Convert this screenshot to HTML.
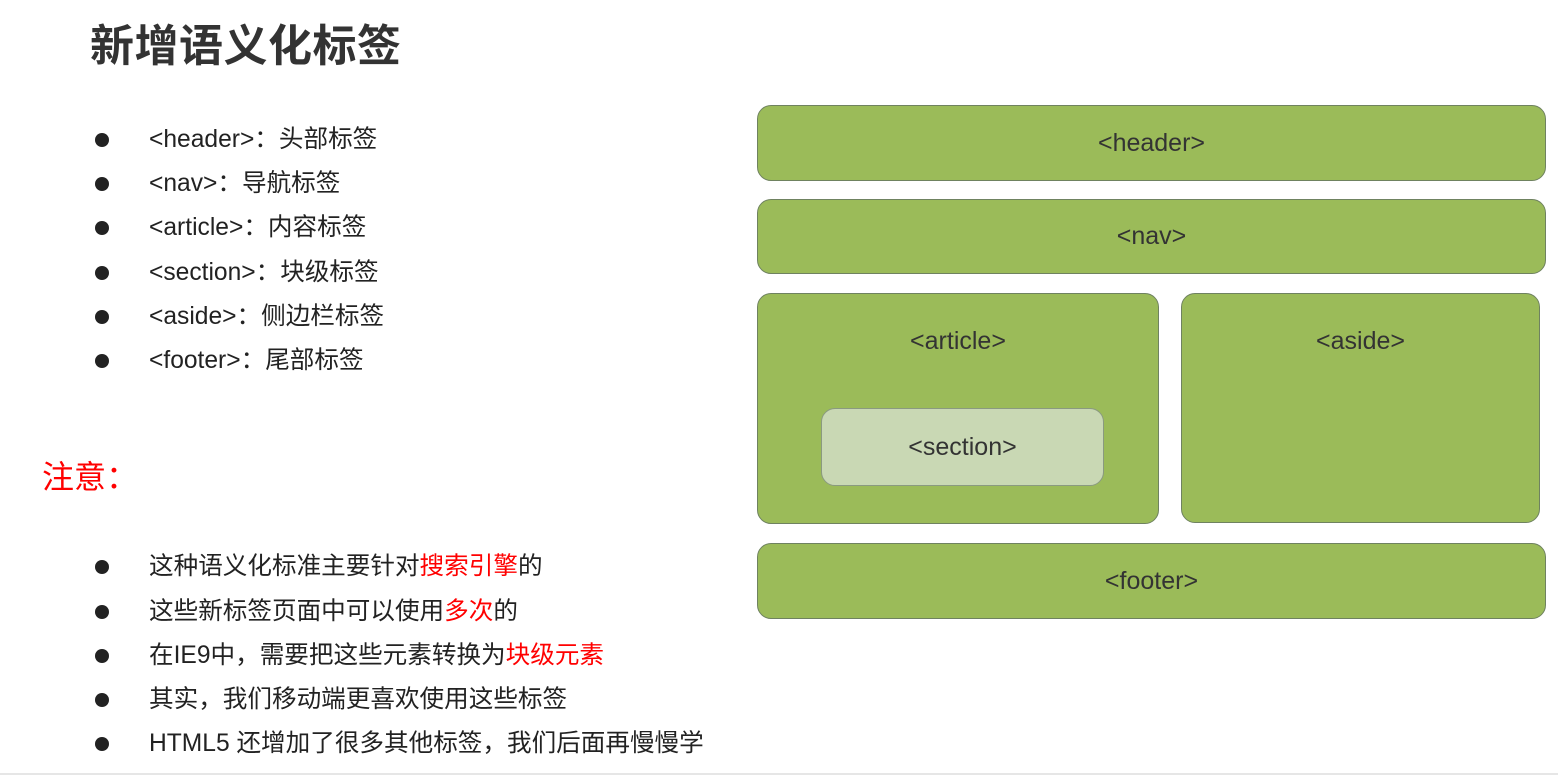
<!DOCTYPE html>
<html><head><meta charset="utf-8"><style>
body{margin:0;width:1558px;height:777px;background:#fff;position:relative;overflow:hidden;font-family:"Liberation Sans","Noto Sans CJK SC",sans-serif;color:#222}
.t{position:absolute;left:90px;top:10px;font-size:44px;font-weight:bold;color:#333;letter-spacing:0.5px}
.li{position:absolute;left:149px;font-size:24.6px;line-height:30px;color:#222;white-space:nowrap}
.li:before{content:"";position:absolute;left:-54px;top:8px;width:14px;height:14px;border-radius:50%;background:#222}
.r{color:#f00}
.n{position:absolute;left:42px;top:452px;font-size:32px;color:#f00}
.b{position:absolute;background:#9bbb59;border:1.5px solid #6f8260;border-radius:14px;box-sizing:border-box;text-align:center;font-size:25px;color:#333}
.line{position:absolute;left:0;top:773px;width:1558px;height:2px;background:#e6e6e6}
</style></head><body>
<div class="t">新增语义化标签</div>
<div class="li" style="top:125px">&lt;header&gt;：头部标签</div>
<div class="li" style="top:169px">&lt;nav&gt;：导航标签</div>
<div class="li" style="top:213px">&lt;article&gt;：内容标签</div>
<div class="li" style="top:258px">&lt;section&gt;：块级标签</div>
<div class="li" style="top:302px">&lt;aside&gt;：侧边栏标签</div>
<div class="li" style="top:346px">&lt;footer&gt;：尾部标签</div>
<div class="n">注意：</div>
<div class="li" style="top:552px">这种语义化标准主要针对<span class="r">搜索引擎</span>的</div>
<div class="li" style="top:597px">这些新标签页面中可以使用<span class="r">多次</span>的</div>
<div class="li" style="top:641px">在IE9中，需要把这些元素转换为<span class="r">块级元素</span></div>
<div class="li" style="top:685px">其实，我们移动端更喜欢使用这些标签</div>
<div class="li" style="top:729px">HTML5 还增加了很多其他标签，我们后面再慢慢学</div>
<div class="b" style="left:757px;top:105px;width:789px;height:76px;line-height:74px">&lt;header&gt;</div>
<div class="b" style="left:757px;top:199px;width:789px;height:75px;line-height:73px">&lt;nav&gt;</div>
<div class="b" style="left:757px;top:293px;width:402px;height:231px;padding-top:33px">&lt;article&gt;</div>
<div class="b" style="left:1181px;top:293px;width:359px;height:230px;padding-top:33px">&lt;aside&gt;</div>
<div class="b" style="left:821px;top:408px;width:283px;height:78px;line-height:76px;background:#c9d8b4;border-color:#8a9a80">&lt;section&gt;</div>
<div class="b" style="left:757px;top:543px;width:789px;height:76px;line-height:74px">&lt;footer&gt;</div>
<div class="line"></div>
</body></html>
